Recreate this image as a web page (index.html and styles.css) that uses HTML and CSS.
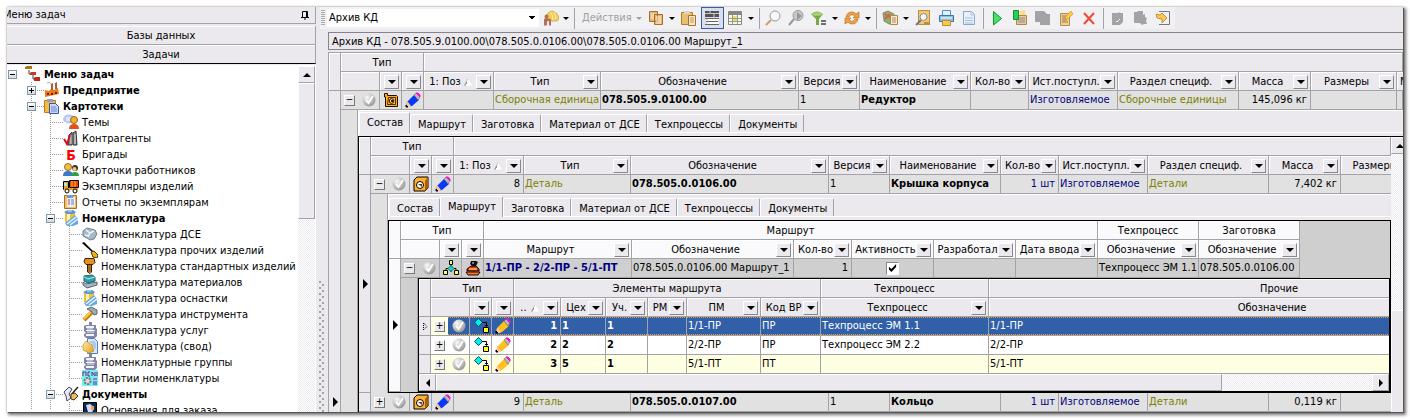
FILE: index.html
```html
<!DOCTYPE html>
<html lang="ru">
<head>
<meta charset="utf-8">
<title>Архив КД</title>
<link rel="stylesheet" href="styles.css">
</head>
<body>
<svg class="sprite" aria-hidden="true">
  <defs>
    <radialGradient id="g-ball" cx=".35" cy=".3" r=".8"><stop offset="0" stop-color="#fafafa"/><stop offset=".55" stop-color="#c0c0c0"/><stop offset="1" stop-color="#8c8c8c"/></radialGradient>
    <linearGradient id="g-gold" x1="0" y1="0" x2="1" y2="1"><stop offset="0" stop-color="#fff0a0"/><stop offset="1" stop-color="#e09a20"/></linearGradient>
  </defs>
  <symbol id="i-check" viewBox="0 0 16 16"><circle cx="8" cy="8" r="6.500" fill="url(#g-ball)"/><path d="M5 8l2.500 3L12 4" fill="none" stroke="#fff" stroke-width="1.800"/></symbol>
  <symbol id="i-asm" viewBox="0 0 16 16"><path d="M1.500 1.500h3v2h9l1 1v10h-12V5h-1z" fill="#ffa820" stroke="#201000"/><path d="M5.500 5.500h7v7h-8z" fill="#ffb840" stroke="#201000" stroke-width=".8"/><circle cx="8.500" cy="9" r="2.300" fill="#ffe0a0" stroke="#201000"/><path d="M8 8h2v2H8z" fill="#402000"/></symbol>
  <symbol id="i-part" viewBox="0 0 16 16"><path d="M1 4l3-3h11v11l-3 3H1z" fill="#ffb030" stroke="#000"/><path d="M12 5l3-4v11l-3 3z" fill="#a86008"/><circle cx="7" cy="9" r="3.500" fill="#fff" stroke="#000"/><path d="M5 8l4 3V8z" fill="#743c00"/></symbol>
  <symbol id="i-pencil" viewBox="0 0 16 16"><path d="M1 15l1-5 7-7 5 5-7 6z" fill="currentColor"/><path d="M1 15l1-5 1 0 3 4-1 1z" fill="#ffc890"/><path d="M1 15v-2l2 2z" stroke="#000"/><path d="M9 3l2-2 4 4-2 3z" fill="#b8b8c0" stroke="#555" stroke-width=".5"/><path d="M11 1h2l2 2v2z" fill="#ff10c8" stroke="#ff10c8"/></symbol>
  <symbol id="i-flow" viewBox="0 0 16 16"><path d="M8 5v2M8 10v2M5 8.500H3V11M11 8.500h2V11" fill="none" stroke="#000"/><path d="M6.500.5h3v4h-3zM.5 10.500h4v4h-4zM11.500 10.500h4v4h-4z" fill="#ffff50" stroke="#000"/><path d="M8 5.500l3 3-3 3-3-3z" fill="#20d0d0" stroke="#076"/></symbol>
  <symbol id="i-stamp" viewBox="0 0 16 16"><path d="M6 1h5l2 1-2 4H7L5 4z" fill="#111"/><path d="M7 2h2v2H7z" fill="#5080c0"/><path d="M2 9l4-3h5l3 3v2H2z" fill="#c03808" stroke="#200"/><path d="M1 12h14l-2 3H3z" fill="#f08030" stroke="#200"/><path d="M4 9h8" stroke="#ff9a50" stroke-width="2"/></symbol>
  <symbol id="i-link" viewBox="0 0 16 16"><path d="M5.500.5l4 4-4 4-4-4z" fill="#00f0f0" stroke="#055"/><path d="M9 4.500h4.500V8M12 7l1.500 1.500L15 7" fill="none" stroke="#000"/><path d="M10.500 9.500h5v5h-5z" fill="#ffff20" stroke="#000"/></symbol>
  <symbol id="i-press" viewBox="0 0 16 16"><path d="M7 0h3v3h4v3l1 1v7l-2 2H4l-2-2v-2l2-1-2-2V4l2-1h3z" fill="#8484a4"/><path d="M4 4h8v2H4zM4 8h9v1H4zM4 12h8v2H4z" fill="#f4f4fc"/><path d="M5 6h6v2H5zM5 9h7v2H5z" fill="#b8b8d0"/></symbol>
  <symbol id="i-barrel" viewBox="0 0 16 16"><path d="M2 2h10v10l-4 2-6-2z" fill="#f4c030"/><path d="M4 3h3v10H4z" fill="#fff4b8"/><path d="M1 2l4-2h5l3 2-2 2H4z" fill="#6098d0"/><path d="M5 1h4" stroke="#d8ecff"/><path d="M2 13L12 5l3 4v5l-5 2H4z" fill="#68a8e0"/><path d="M4 14l9-7M7 15l8-6" stroke="#e8f6ff" stroke-width="1.500"/></symbol>
</svg>

<div class="window">
  <aside class="side">
    <header class="side-title"><span class="side-name">Меню задач</span>
      <button class="pin" aria-label="Закрепить"><svg viewBox="0 0 9 9"><path d="M1.500 6V.5h5V6M5.500 1v5M0 6.500h8M4 6v3" fill="none" stroke="#000"/></svg></button>
    </header>
    <button class="group">Базы данных</button>
    <button class="group group-open">Задачи</button>
    <div class="tree-wrap">
      <ul class="tree">
        <li><div class="node"><span class="twig none"><button class="exp" aria-label="Свернуть"></button></span><svg viewBox="0 0 16 16"><path d="M4 4v4h4M8 8v5h3" fill="none" stroke="#444"/><path d="M0 1l2-1h5v3H0z" fill="#a87818"/><path d="M5 7l1-1h5v3H5z" fill="#d03820"/><path d="M9 12l1-1h5v4H9z" fill="#c02818"/></svg><b>Меню задач</b></div>
          <ul>
            <li><div class="node"><span class="twig"><button class="exp plus" aria-label="Развернуть"></button></span><svg viewBox="0 0 16 16"><path d="M1 8l4 1 2-2 3 1 4-2 1 6-14 3z" fill="#f07818"/><path d="M7 2l2-1v7H7zM11 1l2-1v7h-2z" fill="#a06040"/><path d="M3 1q2-2 4 1" stroke="#aaa" fill="none"/><path d="M3 11h2v2H3zM7 11h2v2H7zM11 10h2v2h-2z" fill="#702000"/></svg><b>Предприятие</b></div></li>
            <li><div class="node"><span class="twig"><button class="exp" aria-label="Свернуть"></button></span><svg viewBox="0 0 16 16"><path d="M.5 2.500h11v12H.5z" fill="#f8b848" stroke="#c07810"/><path d="M3 1h6v3H3z" fill="#90a0c8"/><path d="M5.500 5.500h6l3 3v7h-9z" fill="#c8d8f8" stroke="#3858a8"/><path d="M7 9h5M7 11h6M7 13h6" stroke="#6888d0"/></svg><b>Картотеки</b></div>
              <ul>
                <li><div class="node"><span class="twig"></span><svg viewBox="0 0 16 16"><ellipse cx="6" cy="5" rx="6" ry="4.500" fill="#b8c8f0"/><path d="M3 4h6M3 6h5M3 8l-1 3 3-2" stroke="#fff" fill="#b8c8f0"/><circle cx="11" cy="6" r="3.500" fill="#f0b030" stroke="#a06010"/><path d="M6 15q0-5 5-5t5 5z" fill="#e05020"/></svg><span>Темы</span></div></li>
                <li><div class="node"><span class="twig"></span><svg viewBox="0 0 16 16"><path d="M6 5l3-3v13H5zM10 3l3-2 1 14h-4z" fill="#888" stroke="#333"/><path d="M8 5v9M12 4v10" stroke="#ddd"/><path d="M1 9l3 5 3-9" fill="none" stroke="#d01020" stroke-width="2"/></svg><span>Контрагенты</span></div></li>
                <li><div class="node"><span class="twig"></span><b class="letter">Б</b><span>Бригады</span></div></li>
                <li><div class="node"><span class="twig"></span><svg viewBox="0 0 16 16"><circle cx="5" cy="5" r="3.500" fill="#f0c040" stroke="#a06820"/><path d="M0 14q0-5 5-5t5 5z" fill="#3878d0"/><circle cx="12" cy="6" r="3" fill="#403020"/><circle cx="11.500" cy="7" r="2" fill="#f0c880"/><path d="M8 14q0-4 4-4t4 4z" fill="#30a048"/></svg><span>Карточки работников</span></div></li>
                <li><div class="node"><span class="twig"></span><svg viewBox="0 0 16 16"><path d="M.5 3.500h5v8h-5z" fill="#f0a020" stroke="#000"/><path d="M1 5h3v3H1z" fill="#a0e8f8"/><path d="M6.500 2.500h9v7h-9z" fill="#f04010" stroke="#000"/><path d="M9 3v6M12 3v6" stroke="#ffc020"/><path d="M1 11h14" stroke="#f0a020" stroke-width="2"/><circle cx="4" cy="13" r="2" fill="#fff" stroke="#000"/><circle cx="12" cy="13" r="2" fill="#fff" stroke="#000"/></svg><span>Экземпляры изделий</span></div></li>
                <li><div class="node"><span class="twig"></span><svg viewBox="0 0 16 16"><path d="M1.500 1.500h12v13h-12z" fill="#f0c060" stroke="#a87020"/><path d="M4 3h8v10H4z" fill="#e8f0ff"/><path d="M4 1h6v3H4z" fill="#60a0e0"/><path d="M5 6h2M5 8h2M5 10h2" stroke="#e03040"/><path d="M8 6h3M8 8h3M8 10h3" stroke="#6080d0"/></svg><span>Отчеты по экземплярам</span></div></li>
                <li><div class="node"><span class="twig"><button class="exp" aria-label="Свернуть"></button></span><svg><use href="#i-barrel"/></svg><b>Номенклатура</b></div>
                  <ul>
                    <li><div class="node"><span class="twig"></span><svg viewBox="0 0 16 16"><path d="M1 5l4-3 4 1 4 1 2 4-3 5-4 1-3-2-4-2z" fill="#a8b8c8" stroke="#70808c"/><path d="M4 4l4 3 4-2M8 7l-2 4M3 9l4 1" stroke="#eef4fa" stroke-width="1.500" fill="none"/></svg><span>Номенклатура ДСЕ</span></div></li>
                    <li><div class="node"><span class="twig"></span><svg viewBox="0 0 16 16"><path d="M0 1l2-1 10 10-1 1z" fill="#000"/><path d="M9 10l3-1 4 4-1 3-4-1z" fill="#f0b010" stroke="#503000"/></svg><span>Номенклатура прочих изделий</span></div></li>
                    <li><div class="node"><span class="twig"></span><svg viewBox="0 0 16 16"><path d="M3 .5h9l1 4-2 2H4L2 4z" fill="#e89018" stroke="#402000"/><path d="M5.500 7h4v7L8 15.500 5.500 14z" fill="#ffc040" stroke="#402000"/><path d="M5 9h5M5 11h5M5 13h5" stroke="#402000"/></svg><span>Номенклатура стандартных изделий</span></div></li>
                    <li><div class="node"><span class="twig"></span><svg viewBox="0 0 16 16"><path d="M2 2l8-1 3 2v4l-7 2-4-2z" fill="#30a0a8" stroke="#206070"/><path d="M1 8l3 2 11-2v3L5 14l-4-3z" fill="#a8b8c8" stroke="#506070"/><path d="M2 3l4 2 7-2" stroke="#b0f0f0" fill="none"/></svg><span>Номенклатура материалов</span></div></li>
                    <li><div class="node"><span class="twig"></span><svg><use href="#i-barrel"/></svg><span>Номенклатура оснастки</span></div></li>
                    <li><div class="node"><span class="twig"></span><svg viewBox="0 0 16 16"><path d="M2 14l8-8" stroke="#c07808" stroke-width="4"/><path d="M2 13l7-7" stroke="#ffc840" stroke-width="2"/><path d="M5 3l4-2 6 3v4l-3 1-3-4z" fill="#a0a8b0" stroke="#606870"/></svg><span>Номенклатура инструмента</span></div></li>
                    <li><div class="node"><span class="twig"></span><svg><use href="#i-press"/></svg><span>Номенклатура услуг</span></div></li>
                    <li><div class="node"><span class="twig"></span><svg viewBox="0 0 16 16"><path d="M5.500.5h7l3 3v12h-10z" fill="#d8e8ff" stroke="#5080c0"/><path d="M8 4h5M10 6h4M11 8h3M12 10h2" stroke="#80a8e0"/><path d="M1 7l3-4 6 4 2 6-5 2-6-3z" fill="url(#g-gold)" stroke="#c09020" stroke-width=".7"/></svg><span>Номенклатура (свод)</span></div></li>
                    <li><div class="node"><span class="twig"></span><svg><use href="#i-press"/></svg><span>Номенклатурные группы</span></div></li>
                    <li><div class="node"><span class="twig"></span><svg viewBox="0 0 16 16"><path d="M0 0h16v16H0z" fill="#70f0f0"/><path d="M1 6V2h3v4M8 2H6v4h2M10 6V2l3 4V2M15 2v4" fill="none" stroke="#802080"/><circle cx="5.500" cy="11" r="3" fill="#ddd" stroke="#777" stroke-width="2" stroke-dasharray="2 1"/><path d="M11 9h4M11 12h4M11 14h4" stroke="#8020a0"/></svg><span>Партии номенклатуры</span></div></li>
                  </ul>
                </li>
                <li><div class="node"><span class="twig"><button class="exp" aria-label="Свернуть"></button></span><svg viewBox="0 0 16 16"><path d="M1 6l5-5 3 2-3 5 2 4-4 3-1-5z" fill="#e8e8f8" stroke="#446"/><path d="M15 1L8 9" stroke="#222" stroke-width="1.500"/><path d="M8 8l4-1 3 3-4 4-3-1z" fill="#f0c050" stroke="#432"/></svg><b>Документы</b></div>
                  <ul>
                    <li><div class="node"><span class="twig"></span><svg viewBox="0 0 16 16"><path d="M1.500.5h13v15h-13z" fill="#102850" stroke="#000"/><path d="M4 3l4-1 4 3-2 6-4-1z" fill="#d0e0f8"/><path d="M9 4h3v4H9z" fill="#f0a060"/></svg><span>Основания для заказа</span></div></li>
                  </ul>
                </li>
              </ul>
            </li>
          </ul>
        </li>
      </ul>
      <div class="vbar"><button class="sbtn up" aria-label="Вверх"></button><div class="thumb"></div></div>
    </div>
  </aside>

  <main class="main">
    <div class="toolstrip">
      <div class="toolbar">
        <span class="grip"></span>
        <select class="combo" aria-label="Архив"><option>Архив КД</option></select>
        <button class="tool" aria-label="Роли"><svg viewBox="0 0 16 16"><path d="M3 9q0-7 6-8 6 1 7 8l-2 2H4z" fill="#f4cc58" stroke="#c09030" stroke-width=".6"/><path d="M7 2q3 2 3 8M11 2q2 3 2 7" stroke="#fff0a8" fill="none"/><circle cx="3.500" cy="6.500" r="2" fill="#b07838"/><path d="M1 15.500V9l2-1 5 1v6.500H6V11H4v4.500z" fill="#b07060"/></svg></button><button class="more" aria-label="Список ролей"></button>
        <i class="sep"></i>
        <button class="text-tool" disabled><u>Д</u>ействия</button><button class="more dim" aria-label="Список действий" disabled></button>
        <button class="tool" aria-label="Копировать"><svg viewBox="0 0 16 16"><path d="M1.500 1.500h8v10h-8zM6.500 4.500h8v10h-8z" fill="#e8b878" stroke="#a87030"/><path d="M8 7h5M8 9h5M8 11h5M8 13h5M3 4h3M3 6h3M3 8h3" stroke="#fff0d0"/></svg></button><button class="more" aria-label="Копировать как"></button>
        <button class="tool" aria-label="Вставить"><svg viewBox="0 0 16 16"><path d="M.5 2.500h11v12H.5z" fill="#e8c070" stroke="#b08030"/><path d="M3 1h6v3H3z" fill="#d8d8c8"/><path d="M7.500 5.500h7v10h-7z" fill="#fae8c8" stroke="#a87030"/><path d="M9 8h4M9 10h4M9 12h4" stroke="#c89050"/></svg></button>
        <button class="tool pressed" aria-label="Группы"><svg viewBox="0 0 16 16"><path d="M1 1h14v6H1z" fill="#555"/><path d="M1 3.500h14M6 1v2M10 4v3" stroke="#ccc"/><path d="M4 9.500h11M2 11.500h12M4 13.500h11" stroke="#fff" stroke-width="2"/><path d="M1 8.500h14M2 11.500h12M1 14.500h14" stroke="#666"/></svg></button>
        <button class="tool" aria-label="Вид таблицы"><svg viewBox="0 0 16 16"><path d="M1.500 1.500h13v13h-13z" fill="#f8f8e8" stroke="#888"/><path d="M1 2h14v3H1z" fill="#888"/><path d="M5.500 5v9M10.500 5v9M2 8.500h12M2 11.500h12" stroke="#999"/><path d="M6 7h4M6 10h4" stroke="#e8e060" stroke-width="2"/></svg></button><button class="more" aria-label="Выбор вида"></button>
        <i class="sep"></i>
        <button class="tool" aria-label="Найти"><svg viewBox="0 0 16 16"><path d="M6 10l-5 5" stroke="#c8a078" stroke-width="2"/><circle cx="10" cy="6" r="5" fill="#f8f8fc" stroke="#999"/></svg></button>
        <button class="tool" aria-label="Найти далее"><svg viewBox="0 0 16 16"><path d="M6 9l-5 6" stroke="#999" stroke-width="2"/><circle cx="10" cy="5.500" r="5" fill="#c8c8cc" stroke="#999"/><path d="M9 2l5 4-5 4zM6 13l5-5" fill="#999"/></svg></button>
        <button class="tool" aria-label="Фильтр"><svg viewBox="0 0 16 16"><path d="M0 4q6-5 12 0L8 9v6H5V9z" fill="#78a848"/><ellipse cx="6" cy="4" rx="5" ry="1.800" fill="#a8d078"/><path d="M10 11h5M10 14h5" stroke="#444" stroke-width="1.500"/></svg></button><button class="more" aria-label="Список фильтров"></button>
        <button class="tool" aria-label="Обновить"><svg viewBox="0 0 16 16"><path d="M2 7q1-5 6-5 3 0 4 2l3-2v6H9l2-2q-4-3-6 1z" fill="#f0a040" stroke="#b06818" stroke-width=".6"/><path d="M14 9q-1 5-6 5-3 0-4-2l-3 2V8h6l-2 2q4 3 6-1z" fill="#f0a040" stroke="#b06818" stroke-width=".6"/></svg></button><button class="more" aria-label="Режимы обновления"></button>
        <i class="sep"></i>
        <button class="tool" aria-label="Отчеты"><svg viewBox="0 0 16 16"><path d="M1 3l5-2 6 3v9l-5 1-5-3z" fill="#90b070" stroke="#607840" stroke-width=".7"/><path d="M3 4l6 4M3 9l5-5" stroke="#d86050" stroke-width="2"/><path d="M8.500 5.500h7v9h-7z" fill="#fae8c0" stroke="#b08840"/><path d="M10 8h4M10 10h4M10 12h4" stroke="#a88"/></svg></button><button class="more" aria-label="Список отчетов"></button>
        <button class="tool" aria-label="Просмотр"><svg viewBox="0 0 16 16"><path d="M3.500.5h11v14h-11z" fill="#f0c878" stroke="#b89040"/><path d="M1 15l5-5" stroke="#777" stroke-width="2"/><circle cx="8.500" cy="7" r="3.500" fill="#f0f8ff" stroke="#888"/><path d="M9 12h6v3H9z" fill="#b89040"/></svg></button>
        <button class="tool" aria-label="Печать"><svg viewBox="0 0 16 16"><path d="M4.500.5h8v5h-8z" fill="#e0f0ff" stroke="#5090c0"/><path d="M1.500 5.500h14v6h-14z" fill="#90c0e0" stroke="#3878a8"/><path d="M3 8h11" stroke="#fff"/><path d="M4.500 10.500h8v5h-8z" fill="#f8c850" stroke="#b89030"/></svg></button>
        <button class="tool" aria-label="Документ"><svg viewBox="0 0 16 16"><path d="M2.500 1.500h8l3 3v10h-11z" fill="#e8f0fc" stroke="#88a8d0"/><path d="M10 1v4h4M4 8h8M4 10.500h8M4 13h8" stroke="#a8c0e0" fill="none"/></svg></button>
        <i class="sep"></i>
        <button class="tool" aria-label="Запуск"><svg viewBox="0 0 16 16"><path d="M4.500 1.500l8 7-8 6.500z" fill="#48e068" stroke="#109838"/></svg></button>
        <button class="tool" aria-label="Новая запись"><svg viewBox="0 0 16 16"><path d="M4.500 5.500h10v9h-10z" fill="#e8c898" stroke="#a88850"/><path d="M6 8h7M6 10h7M6 12h7" stroke="#988"/><path d="M1.500.5h5v9h-5z" fill="#28d050" stroke="#189038"/><path d="M8 1l5-1v5H8z" fill="#f8e080"/></svg></button>
        <button class="tool" aria-label="Копия записи" disabled><svg viewBox="0 0 16 16"><path d="M0 1h9l3 3h3v11H5v-3H0z" fill="#a3a3a7"/></svg></button>
        <button class="tool" aria-label="Изменить"><svg viewBox="0 0 16 16"><path d="M2.500 3.500h9v12h-9z" fill="#f0d098" stroke="#b09050"/><path d="M4 6h5M4 8h4M4 10h5M4 12h6" stroke="#a07840"/><path d="M7 9l1-3 5-5 2 3-5 5z" fill="#ffc840" stroke="#c09030" stroke-width=".6"/></svg></button>
        <button class="tool" aria-label="Удалить"><svg viewBox="0 0 16 16"><path d="M3 3l10 11M13 3L3 14" stroke="#f04838" stroke-width="2"/></svg></button>
        <i class="sep"></i>
        <button class="tool" aria-label="Принять" disabled><svg viewBox="0 0 16 16"><path d="M3 3h6l1-1 1 1h3v9l-3 3H3z" fill="#a3a3a7"/><path d="M7 11l1 1 3-3" stroke="#eee" fill="none"/></svg></button>
        <button class="tool" aria-label="Параметры" disabled><svg viewBox="0 0 16 16"><path d="M2 2h3l1-1h5v4l2-1v3l2 1-1 3 1 3h-3l-2 1-2-2H2z" fill="#a3a3a7"/></svg></button>
        <button class="tool" aria-label="Выход"><svg viewBox="0 0 16 16"><path d="M4 1.500h10.500v13H4" fill="none" stroke="#777"/><path d="M1 4l4 1 2-2 5 5-5 5V9L2 8z" fill="#ffc850" stroke="#b88020" stroke-width=".8"/></svg></button>
      </div>
    </div>

    <div class="workspace">
      <div class="splitter"><span class="splitter-dots"></span></div>
      <section class="content">
        <div class="path">Архив КД - 078.505.9.0100.00\078.505.0.0106.00\078.505.0.0106.00 Маршрут_1</div>

        <div class="frame frame-root">
        <table class="grid">
          <colgroup><col class="c12"><col class="c17"><col class="c22"><col class="c22"><col class="c22"><col class="c70"><col class="c107"><col class="c198"><col class="c61"><col class="c111"><col class="c58"><col class="c89"><col class="c121"><col class="c72"><col class="c86"><col></colgroup>
          <thead>
            <tr><th class="ind" rowspan="2"></th><th colspan="4">Тип</th><th colspan="11"></th></tr>
            <tr><th colspan="2"></th>
              <th><div class="head"><span></span><button class="drop" aria-label="Фильтр"></button></div></th>
              <th><div class="head"><span></span><button class="drop" aria-label="Фильтр"></button></div></th>
              <th><div class="head"><span>1: Поз</span><i class="sort"></i><button class="drop" aria-label="Фильтр"></button></div></th>
              <th><div class="head"><span>Тип</span><button class="drop" aria-label="Фильтр"></button></div></th>
              <th><div class="head"><span>Обозначение</span><button class="drop" aria-label="Фильтр"></button></div></th>
              <th><div class="head"><span>Версия</span><button class="drop" aria-label="Фильтр"></button></div></th>
              <th><div class="head"><span>Наименование</span><button class="drop" aria-label="Фильтр"></button></div></th>
              <th><div class="head"><span>Кол-во</span><button class="drop" aria-label="Фильтр"></button></div></th>
              <th><div class="head"><span>Ист.поступл.</span><button class="drop" aria-label="Фильтр"></button></div></th>
              <th><div class="head"><span>Раздел специф.</span><button class="drop" aria-label="Фильтр"></button></div></th>
              <th><div class="head"><span>Масса</span><button class="drop" aria-label="Фильтр"></button></div></th>
              <th><div class="head"><span>Размеры</span><button class="drop" aria-label="Фильтр"></button></div></th>
              <th class="cut"><div class="head">М</div></th></tr>
          </thead>
          <tbody>
            <tr><td class="ind current" rowspan="2"></td><td class="box"><button class="pm" aria-label="Свернуть">−</button></td><td class="ico"><svg><use href="#i-check"/></svg></td><td class="ico"><svg><use href="#i-asm"/></svg></td><td class="ico blue"><svg><use href="#i-pencil"/></svg></td><td></td><td class="olive">Сборочная единица</td><td class="bold">078.505.9.0100.00</td><td>1</td><td class="bold">Редуктор</td><td></td><td class="navy">Изготовляемое</td><td class="olive">Сборочные единицы</td><td class="num">145,096 кг</td><td></td><td></td></tr>
            <tr><td class="indent"></td><td class="detail detail-tall" colspan="14">
              <nav class="tabs"><button class="tab on">Состав</button><button class="tab">Маршрут</button><button class="tab">Заготовка</button><button class="tab">Материал от ДСЕ</button><button class="tab">Техпроцессы</button><button class="tab">Документы</button></nav>
              <div class="frame frame-scroll">
              <table class="grid">
                <colgroup><col class="c12"><col class="c17"><col class="c22"><col class="c22"><col class="c22"><col class="c70"><col class="c107"><col class="c198"><col class="c61"><col class="c111"><col class="c58"><col class="c89"><col class="c121"><col class="c72"><col></colgroup>
                <thead>
                  <tr><th class="ind" rowspan="2"></th><th colspan="4">Тип</th><th colspan="10"></th></tr>
                  <tr><th colspan="2"></th>
                    <th><div class="head"><span></span><button class="drop" aria-label="Фильтр"></button></div></th>
                    <th><div class="head"><span></span><button class="drop" aria-label="Фильтр"></button></div></th>
                    <th><div class="head"><span>1: Поз</span><i class="sort"></i><button class="drop" aria-label="Фильтр"></button></div></th>
                    <th><div class="head"><span>Тип</span><button class="drop" aria-label="Фильтр"></button></div></th>
                    <th><div class="head"><span>Обозначение</span><button class="drop" aria-label="Фильтр"></button></div></th>
                    <th><div class="head"><span>Версия</span><button class="drop" aria-label="Фильтр"></button></div></th>
                    <th><div class="head"><span>Наименование</span><button class="drop" aria-label="Фильтр"></button></div></th>
                    <th><div class="head"><span>Кол-во</span><button class="drop" aria-label="Фильтр"></button></div></th>
                    <th><div class="head"><span>Ист.поступл.</span><button class="drop" aria-label="Фильтр"></button></div></th>
                    <th><div class="head"><span>Раздел специф.</span><button class="drop" aria-label="Фильтр"></button></div></th>
                    <th><div class="head"><span>Масса</span><button class="drop" aria-label="Фильтр"></button></div></th>
                    <th class="open"><div class="head head-sizes"><span>Размеры</span></div></th></tr>
                </thead>
                <tbody>
                  <tr><td class="ind current" rowspan="2"></td><td class="box"><button class="pm" aria-label="Свернуть">−</button></td><td class="ico"><svg><use href="#i-check"/></svg></td><td class="ico"><svg><use href="#i-part"/></svg></td><td class="ico blue"><svg><use href="#i-pencil"/></svg></td><td class="num">8</td><td class="olive">Деталь</td><td class="bold">078.505.0.0106.00</td><td>1</td><td class="bold">Крышка корпуса</td><td class="num navy">1 шт</td><td class="navy">Изготовляемое</td><td class="olive">Детали</td><td class="num">7,402 кг</td><td class="open"></td></tr>
                  <tr><td class="indent"></td><td class="detail" colspan="13">
                    <nav class="tabs"><button class="tab">Состав</button><button class="tab on">Маршрут</button><button class="tab">Заготовка</button><button class="tab">Материал от ДСЕ</button><button class="tab">Техпроцессы</button><button class="tab">Документы</button></nav>
                    <div class="frame frame-box">
                    <table class="grid route">
                      <colgroup><col class="c12"><col class="c17"><col class="c22"><col class="c22"><col class="c22"><col class="c148"><col class="c162"><col class="c58"><col class="c82"><col class="c82"><col class="c82"><col class="c101"><col class="c101"><col></colgroup>
                      <thead>
                        <tr><th class="ind" rowspan="2"></th><th colspan="4">Тип</th><th colspan="6">Маршрут</th><th>Техпроцесс</th><th>Заготовка</th><td class="blank" rowspan="2"></td></tr>
                        <tr><th colspan="2"></th>
                          <th><div class="head"><span></span><button class="drop" aria-label="Фильтр"></button></div></th>
                          <th><div class="head"><span></span><button class="drop" aria-label="Фильтр"></button></div></th>
                          <th><div class="head"><span>Маршрут</span><button class="drop" aria-label="Фильтр"></button></div></th>
                          <th><div class="head"><span>Обозначение</span><button class="drop" aria-label="Фильтр"></button></div></th>
                          <th><div class="head"><span>Кол-во</span><button class="drop" aria-label="Фильтр"></button></div></th>
                          <th><div class="head"><span>Активность</span><button class="drop" aria-label="Фильтр"></button></div></th>
                          <th><div class="head"><span>Разработал</span><button class="drop" aria-label="Фильтр"></button></div></th>
                          <th><div class="head"><span>Дата ввода</span><button class="drop" aria-label="Фильтр"></button></div></th>
                          <th><div class="head"><span>Обозначение</span><button class="drop" aria-label="Фильтр"></button></div></th>
                          <th><div class="head"><span>Обозначение</span><button class="drop" aria-label="Фильтр"></button></div></th></tr>
                      </thead>
                      <tbody>
                        <tr><td class="ind current" rowspan="2"></td><td class="box"><button class="pm" aria-label="Свернуть">−</button></td><td class="ico"><svg><use href="#i-check"/></svg></td><td class="ico"><svg><use href="#i-flow"/></svg></td><td class="ico"><svg><use href="#i-stamp"/></svg></td><td class="bold navy">1/1-ПР - 2/2-ПР - 5/1-ПТ</td><td>078.505.0.0106.00 Маршрут_1</td><td class="num">1</td><td class="mid"><input type="checkbox" checked aria-label="Активность"></td><td></td><td></td><td>Техпроцесс ЭМ 1.1</td><td>078.505.0.0106.00</td><td class="blank"></td></tr>
                        <tr><td class="indent"></td><td class="detail" colspan="12">
                          <div class="frame frame-box">
                          <table class="grid items">
                            <colgroup><col class="c12"><col class="c17"><col class="c22"><col class="c22"><col class="c22"><col class="c47"><col class="c45"><col class="c42"><col class="c39"><col class="c74"><col class="c60"><col class="c168"><col></colgroup>
                            <thead>
                              <tr><th class="ind" rowspan="2"></th><th colspan="4">Тип</th><th colspan="6">Элементы маршрута</th><th>Техпроцесс</th><th class="open"><div class="band-wide">Прочие</div></th></tr>
                              <tr><th colspan="2"></th>
                                <th><div class="head"><span></span><button class="drop" aria-label="Фильтр"></button></div></th>
                                <th><div class="head"><span></span><button class="drop" aria-label="Фильтр"></button></div></th>
                                <th><div class="head"><span>..</span><i class="sort"></i><button class="drop" aria-label="Фильтр"></button></div></th>
                                <th><div class="head"><span>Цех</span><button class="drop" aria-label="Фильтр"></button></div></th>
                                <th><div class="head"><span>Уч.</span><button class="drop" aria-label="Фильтр"></button></div></th>
                                <th><div class="head"><span>РМ</span><button class="drop" aria-label="Фильтр"></button></div></th>
                                <th><div class="head"><span>ПМ</span><button class="drop" aria-label="Фильтр"></button></div></th>
                                <th><div class="head"><span>Код ВР</span><button class="drop" aria-label="Фильтр"></button></div></th>
                                <th><div class="head"><span>Техпроцесс</span><button class="drop" aria-label="Фильтр"></button></div></th>
                                <th class="open"><div class="head head-wide"><span>Обозначение</span><button class="drop" aria-label="Фильтр"></button></div></th></tr>
                            </thead>
                            <tbody>
                              <tr class="selected"><td class="ind hover"><svg viewBox="0 0 5 9"><path d="M.5 1v7L4 4.500z" fill="none" stroke="#000" stroke-dasharray="1 1"/></svg></td><td class="box"><button class="pm" aria-label="Развернуть">+</button></td><td class="ico"><svg><use href="#i-check"/></svg></td><td class="ico"><svg><use href="#i-link"/></svg></td><td class="ico gold"><svg><use href="#i-pencil"/></svg></td><td class="num bold">1</td><td class="bold">1</td><td class="bold">1</td><td></td><td>1/1-ПР</td><td>ПР</td><td>Техпроцесс ЭМ 1.1</td><td class="open">1/1-ПР</td></tr>
                              <tr><td class="ind"></td><td class="box"><button class="pm" aria-label="Развернуть">+</button></td><td class="ico"><svg><use href="#i-check"/></svg></td><td class="ico"><svg><use href="#i-link"/></svg></td><td class="ico gold"><svg><use href="#i-pencil"/></svg></td><td class="num bold">2</td><td class="bold">2</td><td class="bold">2</td><td></td><td>2/2-ПР</td><td>ПР</td><td>Техпроцесс ЭМ 2.2</td><td class="open">2/2-ПР</td></tr>
                              <tr class="odd"><td class="ind"></td><td class="box"><button class="pm" aria-label="Развернуть">+</button></td><td class="ico"><svg><use href="#i-check"/></svg></td><td class="ico"><svg><use href="#i-link"/></svg></td><td class="ico gold"><svg><use href="#i-pencil"/></svg></td><td class="num bold">3</td><td class="bold">5</td><td class="bold">1</td><td></td><td>5/1-ПТ</td><td>ПТ</td><td></td><td class="open">5/1-ПТ</td></tr>
                            </tbody>
                          </table>
                          <div class="hbar"><button class="sbtn left" aria-label="Влево"></button><div class="hthumb"></div><button class="sbtn right" aria-label="Вправо"></button></div>
                          </div>
                        </td></tr>
                      </tbody>
                    </table>
                    </div>
                  </td></tr>
                  <tr><td class="ind"></td><td class="box"><button class="pm" aria-label="Развернуть">+</button></td><td class="ico"><svg><use href="#i-check"/></svg></td><td class="ico"><svg><use href="#i-part"/></svg></td><td class="ico blue"><svg><use href="#i-pencil"/></svg></td><td class="num">9</td><td class="olive">Деталь</td><td class="bold">078.505.0.0107.00</td><td>1</td><td class="bold">Кольцо</td><td class="num navy">1 шт</td><td class="navy">Изготовляемое</td><td class="olive">Детали</td><td class="num">0,119 кг</td><td class="open"></td></tr>
                </tbody>
              </table>
              <div class="vbar vbar-cut"><button class="sbtn up" aria-label="Вверх"></button><div class="rail"></div><div class="thumb-rest"></div></div>
              </div>
            </td></tr>
          </tbody>
        </table>
        </div>
      </section>
    </div>
  </main>
</div>
</body>
</html>
```
FILE: styles.css
```css
:root {
  --face: #ebe9ed;
  --line: #a3a2a8;
  --row: #e1e1e1;
  --row-route: #cfcfcf;
  --cream: #ffffe1;
  --select: #315fa8;
}

* { box-sizing: border-box; }

body {
  margin: 0;
  padding: 7px;
  background: #fff;
  color: #000;
  font: 11px/16px "DejaVu Sans Condensed", "DejaVu Sans", sans-serif;
  overflow: hidden;
}

button {
  margin: 0;
  padding: 0;
  border: 0;
  background: none;
  color: #000;
  font: inherit;
}

.sprite { position: absolute; width: 0; height: 0; }

.window {
  display: flex;
  height: calc(100vh - 14px);
  background: var(--face);
  box-shadow: 1px 1px 0 #555, 2px 2px 3px 1px rgba(0, 0, 0, .55), 0 0 2px rgba(0, 0, 0, .25);
}

/* ---- task menu ---- */

.side { display: flex; flex: none; flex-direction: column; width: 309px; }

.side-title {
  display: flex;
  align-items: center;
  justify-content: space-between;
  height: 17px;
  margin-bottom: 2px;
  padding-right: 5px;
  border: solid var(--line);
  border-width: 0 1px 1px 0;
  overflow: hidden;
}

.side-name { margin-left: -4px; }
.pin { width: 9px; height: 9px; }
.pin svg { display: block; width: 9px; height: 9px; }

.group {
  height: 19px;
  padding-top: 2px;
  border: solid var(--line);
  border-width: 0 1px 1px 0;
  box-shadow: inset 0 1px #fff;
  text-align: center;
}

.group-open { border-bottom-color: #000; }

.tree-wrap {
  display: flex;
  flex: 1;
  min-height: 0;
  margin-top: 1px;
  padding-top: 1px;
  border-right: 1px solid #fff;
  background: #fff;
  overflow: hidden;
}

.tree { flex: 1; min-width: 0; }
.tree, .tree ul { margin: 0; padding: 0; list-style: none; }

.tree ul {
  margin-left: 19px;
  background: repeating-linear-gradient(#999 0 1px, transparent 1px 2px) 5px 0 / 1px calc(100% - 8px) no-repeat;
}

.node { display: flex; align-items: center; height: 16px; line-height: 16px; white-space: nowrap; }
.node > svg { flex: none; width: 16px; height: 16px; margin-right: 3px; }
.node > span:last-child, .node > b { padding-top: 2px; }

.letter { width: 16px; margin-right: 3px; color: #f00; font-size: 14px; text-align: center; }

.twig {
  display: flex;
  flex: none;
  align-items: center;
  width: 18px;
  height: 16px;
  padding-left: 1px;
  background: repeating-linear-gradient(90deg, #999 0 1px, transparent 1px 2px) 5px 8px / 13px 1px no-repeat;
}

.twig.none { background: none; }

.exp {
  width: 9px;
  height: 9px;
  border: 1px solid #7898b5;
  background: linear-gradient(#000, #000) center / 5px 1px no-repeat, linear-gradient(#fff, #dcd8d0);
}

.exp.plus {
  background: linear-gradient(#000, #000) center / 5px 1px no-repeat, linear-gradient(#000, #000) center / 1px 5px no-repeat, linear-gradient(#fff, #dcd8d0);
}

/* ---- scroll bars ---- */

.vbar, .hbar, .rail {
  background: conic-gradient(#fff 25%, var(--face) 0 50%, #fff 0 75%, var(--face) 0) 0 0 / 2px 2px;
}

.vbar { display: flex; flex: none; flex-direction: column; width: 17px; }

.sbtn {
  display: flex;
  flex: none;
  align-items: center;
  justify-content: center;
  width: 17px;
  height: 17px;
  border: 1px solid;
  border-color: #fff var(--line) var(--line) #fff;
  background: var(--face);
}

.sbtn::before { content: ""; border: 4px solid transparent; }
.sbtn.up::before { border-width: 0 4px 4px; border-bottom-color: #000; }
.sbtn.left::before { border-width: 4px 4px 4px 0; border-right-color: #000; }
.sbtn.right::before { border-width: 4px 0 4px 4px; border-left-color: #000; }

.thumb { height: 136px; border: 1px solid; border-color: #fff var(--line) var(--line) #fff; background: var(--face); }

.vbar-cut { width: 12px; overflow: hidden; }
.rail { height: 156px; }
.thumb-rest { flex: 1; border: solid #fff; border-width: 1px 0 0 1px; background: var(--face); }

.hbar { display: flex; height: 17px; }
.hthumb { flex: none; width: 81%; margin-right: auto; border: 1px solid; border-color: #fff var(--line) var(--line) #fff; background: var(--face); }

/* ---- toolbar ---- */

.main { display: flex; flex: 1; flex-direction: column; min-width: 0; }
.toolstrip { display: flex; flex: none; height: 25px; padding-left: 4px; overflow: hidden; }

.toolbar {
  display: flex;
  align-items: center;
  height: 22px;
  padding-left: 1px;
  background: #f1f0f2;
}

.grip { width: 4px; height: 16px; margin-right: 2px; background: repeating-linear-gradient(#aaa 0 1px, transparent 1px 2px); }

.combo {
  width: 212px;
  height: 18px;
  padding: 0 2px;
  border: 0;
  border-radius: 0;
  appearance: none;
  background: conic-gradient(from -45deg at 50% 100%, #000 90deg, transparent 0) calc(100% - 4px) 7px / 6px 3px no-repeat, #fff;
  color: #000;
  font: inherit;
}

.tool {
  display: flex;
  flex: none;
  align-items: center;
  justify-content: center;
  width: 23px;
  height: 22px;
}

.tool svg { width: 16px; height: 16px; }
.tool.pressed { border: 1px solid #315fa8; background: #dcdfe9; }

.more { width: 10px; height: 22px; }
.more::before { content: ""; display: block; width: 0; margin-left: 1px; border: solid transparent; border-width: 3px 3px 0; border-top-color: #000; }
.more.dim::before { border-top-color: #a0a0a4; }

.sep { width: 1px; height: 21px; margin: 0 2px; background: var(--line); }
.text-tool { padding: 0 3px 0 5px; color: #a0a0a4; }

/* ---- workspace ---- */

.workspace { display: flex; flex: 1; min-height: 0; }
.splitter { display: flex; flex: none; align-items: flex-end; width: 12px; padding-left: 3px; }

.splitter-dots {
  width: 6px;
  height: 131px;
  background:
    conic-gradient(from 0deg at 2px 2px, transparent 270deg, #a3a2a8 0) 0 0 / 6px 6px,
    conic-gradient(from 0deg at 2px 2px, transparent 270deg, #a3a2a8 0) 3px 3px / 6px 6px;
}

.content { display: flex; flex: 1; flex-direction: column; min-width: 0; overflow: hidden; }

.path {
  flex: none;
  height: 18px;
  margin-bottom: 2px;
  padding-left: 3px;
  border: 1px solid #85848c;
  border-right: 0;
  line-height: 18px;
  white-space: nowrap;
}

/* ---- nested grids ---- */

.frame { border: 0 solid #000; border-width: 1px 0 0 1px; }
.frame-root { border-color: var(--line); }
.frame-scroll { display: flex; min-height: 577px; }
.frame-scroll > .grid { align-self: flex-start; flex: 1; width: 0; }
.frame-box { border-width: 1px; overflow: hidden; }

.grid { width: 100%; border-spacing: 0; table-layout: fixed; }

.c12 { width: 12px; }
.c17 { width: 17px; }
.c22 { width: 22px; }
.c39 { width: 39px; }
.c42 { width: 42px; }
.c45 { width: 45px; }
.c47 { width: 47px; }
.c58 { width: 58px; }
.c60 { width: 60px; }
.c61 { width: 61px; }
.c70 { width: 70px; }
.c72 { width: 72px; }
.c74 { width: 74px; }
.c82 { width: 82px; }
.c86 { width: 86px; }
.c89 { width: 89px; }
.c101 { width: 101px; }
.c107 { width: 107px; }
.c111 { width: 111px; }
.c121 { width: 121px; }
.c148 { width: 148px; }
.c162 { width: 162px; }
.c168 { width: 168px; }
.c198 { width: 198px; }

.grid th, .grid td {
  height: 19px;
  padding: 0 1px;
  border: solid var(--line);
  border-width: 0 1px 1px 0;
  overflow: hidden;
  font-weight: normal;
  text-align: left;
  vertical-align: middle;
  white-space: nowrap;
}

.grid th { padding: 0; background: var(--face); box-shadow: inset 1px 1px #fff; text-align: center; }
.grid thead tr:first-child th { padding-top: 2px; }
.grid td { background: var(--row); }
.grid .open { border-right: 0; }
.grid .cut { border-right: 0; }

.route > thead th { background: #fafafc; }
.grid.route > thead > tr > th { background: #fafafc; }
.route > tbody > tr > td { background: var(--row-route); }
.grid.route .blank { border: 0; background: var(--row-route); }

.grid.items > thead > tr > th { background: var(--face); }
.items > tbody > tr > td { background: #fff; }
.items > tbody > .odd > td { background: var(--cream); }
.items > tbody > .selected > td {
  background:
    repeating-linear-gradient(90deg, #e8a030 0 1px, transparent 1px 2px) 0 0 / 100% 1px no-repeat,
    repeating-linear-gradient(90deg, #e8a030 0 1px, transparent 1px 2px) 0 100% / 100% 1px no-repeat,
    var(--select);
  background-clip: padding-box;
  background-origin: padding-box;
  color: #fff;
}
.items > tbody > .selected > .box { background: var(--cream); }

.grid td.ind, .items > tbody > tr > td.ind, .items > tbody > .selected > td.ind { background: var(--face); }
.grid.route > tbody > tr > td.ind { background: #fafafc; }

.grid td.current::before {
  content: "";
  display: block;
  width: 0;
  margin-left: 3px;
  border: solid transparent;
  border-width: 5px 0 5px 5px;
  border-left-color: #000;
}

.hover svg { display: block; width: 5px; height: 9px; margin-left: 3px; }

.grid td.box { padding: 0 0 0 3px; border-right: 0; line-height: 0; }
.grid td.ico { padding: 0 0 0 3px; line-height: 0; }
.ico svg { width: 16px; height: 16px; }
.blue { color: #0838f8; }
.gold svg { color: #ffc020; }

.grid td.num { padding-right: 3px; text-align: right; }
.grid td.mid { text-align: center; line-height: 0; }
.grid td.bold { font-weight: bold; }
.olive { color: #808000; }
.navy { color: #000080; }

.pm {
  width: 11px;
  height: 11px;
  border: 1px solid;
  border-color: #fff #777 #777 #fff;
  background: var(--face);
  font-size: 10px;
  line-height: 8px;
}

.grid td.indent { padding: 0; border-bottom: 0; }
.grid td.detail { padding: 0; border: 0; background: var(--face); vertical-align: top; }

.head { display: flex; align-items: center; height: 18px; padding: 2px 2px 0 3px; }
.head span { flex: 1; min-width: 0; }
.head-sizes { width: 86px; padding-right: 21px; }
.head-wide, .band-wide { width: 580px; }

.drop {
  flex: none;
  width: 15px;
  height: 14px;
  border: 1px solid;
  border-color: #fff #88878e #88878e #fff;
  background: var(--face);
}

.drop::before { content: ""; display: block; width: 0; margin: 0 auto; border: solid transparent; border-width: 4px 4px 0; border-top-color: #000; }

.sort {
  width: 8px;
  height: 7px;
  margin: 0 4px 0 1px;
  background: linear-gradient(105deg, #999 38%, #fff 40%);
  clip-path: polygon(50% 0, 100% 100%, 0 100%);
}

input[type="checkbox"] {
  width: 13px;
  height: 13px;
  margin: 0;
  border: 1px solid;
  border-color: #888 #fff #fff #888;
  appearance: none;
  background: #fff;
}

input[type="checkbox"]::before {
  content: "";
  display: block;
  width: 9px;
  height: 9px;
  margin: 1px;
  background: #000;
  clip-path: polygon(10% 35%, 38% 60%, 90% 5%, 90% 40%, 38% 95%, 10% 68%);
}

/* ---- tabs ---- */

.tabs {
  display: flex;
  align-items: flex-end;
  height: 26px;
  padding: 2px 0 0 1px;
  background: linear-gradient(#fff, #fff) 0 22px / 100% 1px no-repeat;
  box-shadow: inset 1px 1px #fff;
}

.tab {
  height: 18px;
  margin-bottom: 4px;
  padding: 2px 6px 0 7px;
  border: solid;
  border-width: 1px 1px 0;
  border-color: #fff var(--line) #fff #fff;
  border-radius: 2px 2px 0 0;
  background: var(--face);
  line-height: 15px;
}

.tab.on { height: 21px; margin-bottom: 3px; padding-bottom: 3px; }
```
